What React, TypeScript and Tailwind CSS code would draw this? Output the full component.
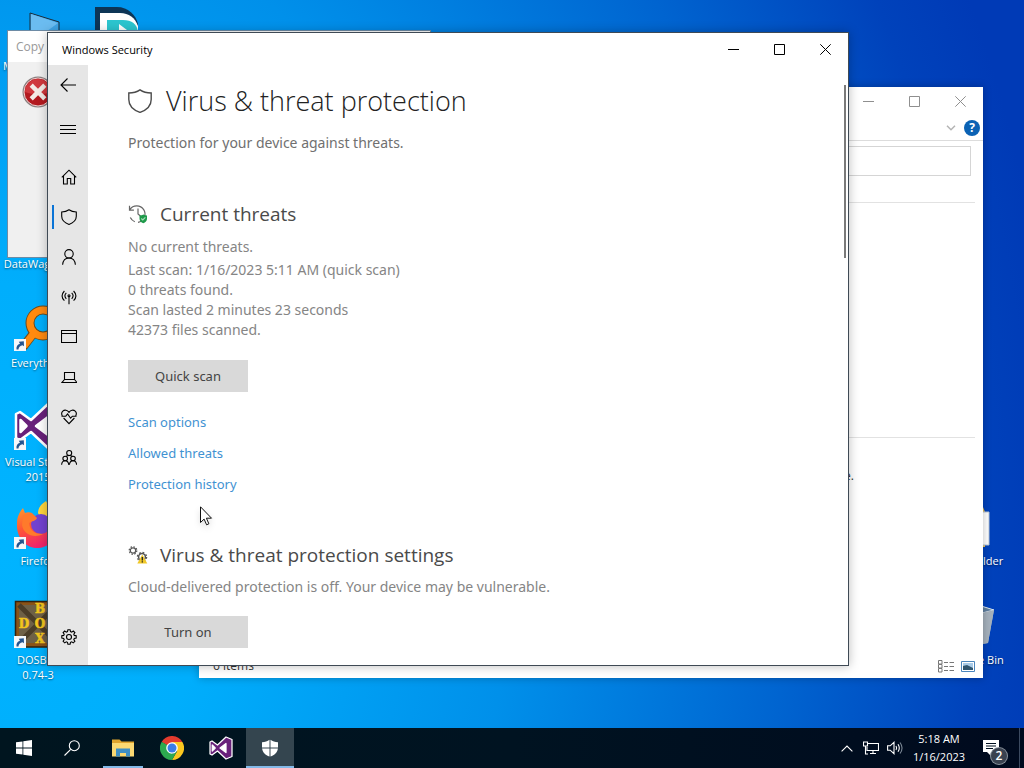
import type { ReactNode } from "react";

const ICON = { fill: "none", stroke: "currentColor", strokeWidth: 1.1 } as const;

function ShieldOutline({ className }: { className: string }) {
  return (
    <svg viewBox="0 0 24 24" className={className} fill="none" stroke="currentColor" strokeWidth="1.400" aria-hidden="true">
      <path d="M12 .8C9 2.800 5 3.900 .8 4v6.500c0 6.500 4.500 10.500 11.200 12.900 6.700-2.400 11.200-6.400 11.200-12.900V4C19 3.900 15 2.800 12 .8z" />
    </svg>
  );
}

function VisualStudioLogo({ className }: { className: string }) {
  return (
    <svg viewBox="0 0 48 48" className={className} aria-hidden="true">
      <path
        fillRule="evenodd"
        fill="#68217a"
        stroke="#fff"
        strokeWidth="2.500"
        strokeLinejoin="round"
        d="M34 2l12 5v34l-12 5-17-16-11 8-4-2V12l4-2 11 8zM34 15v18L22 24zM6.500 18v12l6-6z"
      />
      <path d="M34 15v18L22 24zM6.500 18v12l6-6z" fill="#fff" />
    </svg>
  );
}

function Shortcut() {
  return (
    <svg viewBox="0 0 12 12" className="absolute bottom-0 left-0 h-3 w-3" aria-hidden="true">
      <path d="M0 0h12v12H0z" fill="#f4f7fa" />
      <path d="M2.500 10.500C2 7.500 3.500 5.500 6 4.800L4.800 2.800l5-.6.2 5-1.400-1C6 6.800 4.500 8 4.500 10.500z" fill="#24548f" />
    </svg>
  );
}

function DesktopItem({ label, shortcut, children }: { label: string; shortcut?: boolean; children?: ReactNode }) {
  return (
    <li className="flex h-[99px] w-19 flex-col items-center gap-1">
      <span className="relative block h-12 w-12 shrink-0">
        {children}
        {shortcut && <Shortcut />}
      </span>
      <span className="text-center text-[11px] leading-[15px] whitespace-pre text-white [text-shadow:0_1px_2px_#0008]">{label}</span>
    </li>
  );
}

function Caption({ className }: { className: string }) {
  return (
    <div className={className}>
      <button aria-label="Minimize" className="flex h-8 w-[46px] items-center justify-center">
        <svg viewBox="0 0 11 11" className="h-[11px] w-[11px]" stroke="currentColor"><path d="M0 5.500h11" /></svg>
      </button>
      <button aria-label="Maximize" className="flex h-8 w-[46px] items-center justify-center">
        <svg viewBox="0 0 11 11" className="h-[11px] w-[11px]" fill="none" stroke="currentColor"><path d="M.5 .5h10v10H.5z" /></svg>
      </button>
      <button aria-label="Close" className="flex h-8 w-[46px] items-center justify-center">
        <svg viewBox="0 0 11 11" className="h-[11px] w-[11px]" stroke="currentColor"><path d="M.3 .3l10.400 10.400M10.700 .3L.3 10.700" /></svg>
      </button>
    </div>
  );
}

const NAV: { label: string; icon: ReactNode }[] = [
  { label: "Home", icon: <path d="M.8 8.300L8 1.200l7.200 7.100M2.500 7v8h3.800v-5.500h3.400V15h3.800V7" /> },
  { label: "Virus & threat protection", icon: <path d="M8 .8C6 2.200 3.500 2.900 .7 3v4.300c0 4.200 2.800 6.500 7.300 8.100 4.500-1.600 7.300-3.900 7.300-8.100V3C12.500 2.900 10 2.200 8 .8z" /> },
  { label: "Account protection", icon: <><circle cx="8" cy="4.800" r="4.200" /><path d="M1.600 15.800C2 11.500 4.500 9 8 9s6 2.500 6.400 6.800" /></> },
  {
    label: "Firewall & network protection",
    icon: (
      <>
        <circle cx="8" cy="6.800" r="1" />
        <path d="M8 7.500v7.800M5.300 3.800c-1.600 1.700-1.600 4.300 0 6M10.700 3.800c1.600 1.700 1.600 4.300 0 6M3.400 2C.6 5 .6 8.800 3.400 11.600M12.600 2c2.800 3 2.800 6.800 0 9.600" />
      </>
    ),
  },
  { label: "App & browser control", icon: <path d="M.5 1.500h15v12H.5zM.5 4.500h15" /> },
  { label: "Device security", icon: <path d="M3.500 3.500h10v7h-10zM3.500 10.500l-2.500 3h15l-2.500-3" /> },
  {
    label: "Device performance & health",
    icon: (
      <path d="M1.300 7C.3 5 .6 3.200 1.800 2.100c1.900-1.600 4.500-1.100 6.200 1.200 1.700-2.300 4.300-2.800 6.200-1.200C15.400 3.200 15.700 5 14.700 7M.5 7.200h4.300L6.600 5l3 4.200 1.800-2h4.100M2.600 9l5.400 5.700L13.400 9" />
    ),
  },
  {
    label: "Family options",
    icon: (
      <>
        <circle cx="8.200" cy="4" r="2.500" />
        <circle cx="4.200" cy="9.500" r="2.300" />
        <circle cx="12" cy="9.500" r="2.300" />
        <path d="M.6 15.800c.2-2.700 1.500-4 3.600-4 1.900 0 3.200 1.200 3.600 4M8.400 15.800c.3-2.800 1.700-4 3.600-4 2.100 0 3.400 1.300 3.600 4M5.200 7.200c.7-.5 1.700-.7 3-.7s2.300.2 3 .7" />
      </>
    ),
  },
];

const SCAN_LINES = [
  "Last scan: 1/16/2023 5:11 AM (quick scan)",
  "0 threats found.",
  "Scan lasted 2 minutes 23 seconds",
  "42373 files scanned.",
];

const GEAR_PATH =
  "M6.900 .7h2.200l.4 1.900 1.200.5 1.600-1.100 1.600 1.600-1.100 1.600.5 1.200 1.900.4v2.300l-1.900.4-.5 1.200 1.100 1.600-1.600 1.600-1.600-1.100-1.200.5-.4 1.900H6.900l-.4-1.900-1.200-.5-1.600 1.100-1.600-1.600 1.100-1.600-.5-1.200-1.900-.4V6.800l1.900-.4.5-1.200L2.100 3.600 3.700 2l1.600 1.100 1.200-.5z";

function CopyWindow() {
  return (
    <section aria-label="Copy" className="absolute top-[30px] left-[7px] flex h-[228px] w-[424px] flex-col border border-[#6d8ba5] bg-[#f0f0f0]">
      <header className="h-[31px] bg-white px-2 text-[12px] leading-[31px] text-[#999]">Copy</header>
      <svg viewBox="0 0 32 32" className="mt-3.5 ml-3.5 h-8 w-8" aria-hidden="true">
        <circle cx="16" cy="16" r="15.500" fill="#8a8080" />
        <circle cx="16" cy="16" r="14" fill="#b3191f" stroke="#f0d0d0" />
        <path d="M3 16a13 13 0 0126 0c-8 3-18 3-26 0z" fill="#d0393e" />
        <path d="M10.800 10.800l10.400 10.400M21.200 10.800L10.800 21.200" stroke="#f3ebe6" strokeWidth="4.500" strokeLinecap="square" />
      </svg>
    </section>
  );
}

function ExplorerWindow() {
  return (
    <section aria-label="File Explorer" className="absolute top-[87px] left-[199px] flex h-[591px] w-[784px] flex-col bg-white text-[#333] shadow-[0_0_8px_#0004]">
      <header className="flex h-7 items-center justify-end">
        <Caption className="flex text-[#8f8f8f]" />
      </header>
      <div className="flex h-[26px] items-center justify-end gap-2 border-b border-[#dcdcdc] pr-[3px]">
        <svg viewBox="0 0 10 6" className="h-1.5 w-2.5" fill="none" stroke="#b4b4b4" strokeWidth="1.500" aria-hidden="true"><path d="M1 .8l4 4 4-4" /></svg>
        <button aria-label="Help" className="h-4 w-4 rounded-full bg-[#0b62b4] text-center text-[12px] leading-4 font-bold text-white">?</button>
      </div>
      <div className="px-3 pt-[5px]">
        <input aria-label="Search" className="block h-[30px] w-full border border-[#d5d5d5] bg-white px-2" />
      </div>
      <div className="mt-[26px] mr-2 h-px bg-[#e2e2e2]" />
      <div className="mt-[234px] mr-2 h-px bg-[#e2e2e2]" />
      <p className="mt-[30px] mr-[129px] text-right text-[12px] leading-4">Not available.</p>
      <footer className="mt-auto flex h-6 items-center justify-between pr-2 pl-3.5 text-[12px]">
        <span>6 items</span>
        <span className="flex items-center gap-[7px]">
          <button aria-label="Details view">
            <svg viewBox="0 0 16 13" className="h-[13px] w-4" fill="none" stroke="#777" aria-hidden="true">
              <path d="M.5 .5h3.500v3.500H.5zM.5 4.500h3.500V8H.5zM.5 8.500h3.500V12H.5zM6 2.500h4M11.500 2.500H16M6 6.500h4M11.500 6.500H16M6 10.500h4M11.500 10.500H16" />
            </svg>
          </button>
          <button aria-label="Large icons view">
            <svg viewBox="0 0 14 11" className="h-[11px] w-3.5" aria-hidden="true">
              <path d="M.5 .5h13v10H.5z" fill="#fff" stroke="#4b86bd" />
              <path d="M2 2h10v7H2z" fill="#a8cbe8" />
              <path d="M2 5l4-1 6 3v2H2z" fill="#30566f" />
            </svg>
          </button>
        </span>
      </footer>
    </section>
  );
}

function Sidebar() {
  return (
    <nav aria-label="Sections" className="flex w-10 shrink-0 flex-col bg-[#e6e6e6] text-black">
      <button aria-label="Back" className="flex h-10 items-center justify-center">
        <svg viewBox="0 0 16 14" className="h-3.5 w-4" {...ICON} aria-hidden="true"><path d="M7.500 .5L1 7l6.500 6.500M1 7h15" /></svg>
      </button>
      <button aria-label="Menu" className="mb-1 flex h-12 items-center justify-center">
        <svg viewBox="0 0 16 9" className="h-[9px] w-4" stroke="currentColor" aria-hidden="true"><path d="M0 .5h16M0 4.500h16M0 8.500h16" /></svg>
      </button>
      {NAV.map((item, i) => (
        <button key={item.label} aria-label={item.label} className="relative flex h-10 items-center justify-center pl-0.5">
          {i === 1 && <span className="absolute left-1 h-6 w-0.5 bg-[#0a74d6]" />}
          <svg viewBox="0 0 16 16" className="h-4 w-4" {...ICON} aria-hidden="true">{item.icon}</svg>
        </button>
      ))}
      <button aria-label="Settings" className="mt-auto mb-2 flex h-10 items-center justify-center pl-0.5">
        <svg viewBox="0 0 16 16" className="h-4 w-4" {...ICON} aria-hidden="true"><path d={GEAR_PATH} /><circle cx="8" cy="8" r="2.500" /></svg>
      </button>
    </nav>
  );
}

function SecurityWindow() {
  return (
    <section aria-label="Windows Security" className="absolute top-8 left-[47px] flex h-[634px] w-[802px] flex-col border border-[#3f4a55] bg-white shadow-[0_0_10px_#0004]">
      <header className="flex h-8 shrink-0 items-center justify-between pl-3.5">
        <span className="pt-0.5 text-[11px] text-black">Windows Security</span>
        <Caption className="flex text-black" />
      </header>
      <div className="flex min-h-0 flex-1">
        <Sidebar />
        <main className="min-w-0 flex-1 overflow-hidden px-10 pt-[18px] font-['Noto_Sans','Open_Sans',sans-serif] text-[14px] leading-5 text-[#858585]">
          <h1 className="flex h-9 items-center gap-3.5 font-['Open_Sans','Noto_Sans',sans-serif] text-[27px] leading-9 font-light text-[#222]">
            <ShieldOutline className="h-6 w-6 text-[#4c4c4c]" />
            <span>Virus &amp; threat protection</span>
          </h1>
          <p className="mt-3.5 text-[#707070]">Protection for your device against threats.</p>

          <h2 className="mt-[47px] flex h-7 items-center gap-3 font-['Open_Sans','Noto_Sans',sans-serif] text-[19px] leading-7 text-[#4a4a4a]">
            <svg viewBox="0 0 20 20" className="h-5 w-5" fill="none" aria-hidden="true">
              <path d="M1.800 5.500A8.300 8.300 0 1110 18.300M1.500 1.800v4.400h4.400M10 4.500V10l3 2.500M2.300 13.500c1 2 2.500 3.400 4.500 4.200" stroke="#666" strokeWidth="1.200" />
              <path d="M11.500 11.500c1.500 0 2.600-.3 3.800-1 1.200.7 2.300 1 3.700 1v3.300c0 2.200-1.500 3.700-3.700 4.500-2.300-.8-3.800-2.300-3.800-4.500z" fill="#1e9a4a" />
              <path d="M13.300 14.500l1.500 1.500 2.600-2.700" stroke="#a8dcb8" strokeWidth="1.100" />
            </svg>
            Current threats
          </h2>
          <p className="mt-[9px]">No current threats.</p>
          <div className="mt-[3px]">
            {SCAN_LINES.map((line) => (
              <p key={line}>{line}</p>
            ))}
          </div>
          <button className="mt-5 block h-8 w-30 bg-[#d9d9d9] text-[13px] text-[#444]">Quick scan</button>
          <ul className="mt-5 flex flex-col gap-[11px] text-[13px] text-[#3f92d2]">
            <li><a href="#scan-options">Scan options</a></li>
            <li><a href="#allowed-threats">Allowed threats</a></li>
            <li><a href="#protection-history">Protection history</a></li>
          </ul>

          <h2 className="mt-[47px] flex h-7 items-center gap-3 font-['Open_Sans','Noto_Sans',sans-serif] text-[19px] leading-7 text-[#4a4a4a]">
            <svg viewBox="0 0 20 20" className="h-5 w-5" fill="none" aria-hidden="true">
              <circle cx="5" cy="5.500" r="2.700" stroke="#555" strokeWidth="1.200" />
              <circle cx="5" cy="5.500" r="3.800" stroke="#555" strokeWidth="1.200" strokeDasharray="1.500 1.480" />
              <circle cx="14" cy="12" r="3.400" stroke="#555" strokeWidth="1.500" />
              <circle cx="14" cy="12" r="4.600" stroke="#555" strokeWidth="1.300" strokeDasharray="1.800 1.813" />
              <path d="M14.300 9.500l5 9h-10z" fill="#f0c828" />
              <path d="M14.300 12v3.500M14.300 16.300v1.200" stroke="#222" strokeWidth="1.300" />
            </svg>
            Virus &amp; threat protection settings
          </h2>
          <p className="mt-2">Cloud-delivered protection is off. Your device may be vulnerable.</p>
          <button className="mt-[19px] block h-8 w-30 bg-[#d9d9d9] text-[13px] text-[#444]">Turn on</button>
        </main>
        <div className="mt-5 mr-0.5 h-[173px] w-0.5 bg-[#7a7a7a]" />
      </div>
    </section>
  );
}

function TaskButton({ label, state, children }: { label: string; state?: "open" | "active"; children: ReactNode }) {
  return (
    <button
      aria-label={label}
      className={
        state === "active"
          ? "relative flex w-12 items-center justify-center bg-[#34454f]"
          : "relative flex w-12 items-center justify-center"
      }
    >
      {children}
      {state && (
        <span className={state === "active" ? "absolute inset-x-0 bottom-0 h-0.5 bg-[#83b9e8]" : "absolute inset-x-1 bottom-0 h-0.5 bg-[#83b9e8]"} />
      )}
    </button>
  );
}

function Taskbar() {
  return (
    <footer className="relative flex h-10 shrink-0 justify-between bg-linear-to-r from-[#00151f] via-[#001321] to-[#000a1e] text-white">
      <div className="flex gap-px">
        <div className="mr-0.5 flex">
          <TaskButton label="Start">
            <svg viewBox="0 0 16 16" className="h-4 w-4" fill="#fff" aria-hidden="true">
              <path d="M0 2.300L6.500 1.400v6.200H0zM7.300 1.300L16 0v7.600H7.300zM0 8.400h6.500v6.200L0 13.700zM7.300 8.400H16V16l-8.700-1.300z" />
            </svg>
          </TaskButton>
          <TaskButton label="Search">
            <svg viewBox="0 0 16 16" className="h-4 w-4" {...ICON} aria-hidden="true"><circle cx="10.300" cy="5.700" r="5" /><path d="M6.700 9.300L.5 15.500" /></svg>
          </TaskButton>
        </div>
        <TaskButton label="File Explorer" state="open">
          <svg viewBox="0 0 22 20" className="h-5 w-[22px]" aria-hidden="true">
            <path d="M0 1.500h7.500l2 2H22V8H0z" fill="#e0a52e" />
            <path d="M0 5h22v13.500H0z" fill="#fbd972" />
            <path d="M4 10.500h14v8h-4V15H8v3.500H4z" fill="#3f8fc4" />
          </svg>
        </TaskButton>
        <TaskButton label="Chrome">
          <svg viewBox="0 0 24 24" className="h-6 w-6" aria-hidden="true">
            <path d="M12 12L1.600 6A12 12 0 0122.400 6z" fill="#e33b2e" />
            <path d="M12 12v12A12 12 0 011.600 6z" fill="#2da94f" />
            <path d="M12 6h10.400A12 12 0 0112 24l5.200-9z" fill="#fcc71f" />
            <path d="M6.800 15L1.600 6l5.200 3L12 18l5.200-3L12 24z" fill="#2da94f" />
            <circle cx="12" cy="12" r="5.800" fill="#fff" />
            <circle cx="12" cy="12" r="4.500" fill="#3b7de8" />
          </svg>
        </TaskButton>
        <TaskButton label="Visual Studio">
          <VisualStudioLogo className="h-6 w-6" />
        </TaskButton>
        <TaskButton label="Windows Security" state="active">
          <svg viewBox="0 0 18 18" className="h-[18px] w-[18px]" fill="#fff" aria-hidden="true">
            <path d="M8.500 .8v7.700H1V3.200C4 3.100 6.500 2.300 8.500 .8zM9.500 .8c2 1.500 4.500 2.300 7.500 2.400v5.300H9.500zM1.100 9.500h7.400v8C4.500 16.200 1.600 13.500 1.100 9.500zM9.500 9.500h7.400c-.5 4-3.400 6.700-7.400 8z" />
          </svg>
        </TaskButton>
      </div>
      <div className="flex items-center pr-1">
        <button aria-label="Show hidden icons" className="flex w-6 justify-center">
          <svg viewBox="0 0 12 7" className="h-[7px] w-3" {...ICON} aria-hidden="true"><path d="M.6 6.400L6 1l5.400 5.400" /></svg>
        </button>
        <button aria-label="Network" className="flex w-6 justify-center">
          <svg viewBox="0 0 16 14" className="h-3.5 w-4" {...ICON} aria-hidden="true"><path d="M5 2.500h10.500v7H4V6M7 12.500h6M10 9.500v3M.5 1h4v4h-4zM2.500 5v8H5" /></svg>
        </button>
        <button aria-label="Volume" className="flex w-6 justify-center">
          <svg viewBox="0 0 16 14" className="h-3.5 w-4" {...ICON} aria-hidden="true">
            <path d="M.6 4.800h2.600L7 1.300v11.400L3.200 9.200H.6zM9 5c.8 1.300.8 2.700 0 4M11 3.200c1.700 2.500 1.700 5.100 0 7.600" />
            <path d="M13 1.500c2.600 3.500 2.600 7.500 0 11" stroke="#7a8794" />
          </svg>
        </button>
        <time dateTime="2023-01-16T05:18" className="w-16 text-center text-[11px] leading-[18px]">
          5:18 AM
          <br />
          1/16/2023
        </time>
        <button aria-label="Notifications, 2 new" className="relative flex h-10 w-12 items-center justify-center pr-2">
          <svg viewBox="0 0 16 16" className="h-4 w-4" aria-hidden="true">
            <path d="M0 0h16v12H8v4l-4-4H0z" fill="#fff" />
            <path d="M3 3.500h10M3 6h10M3 8.500h7" stroke="#001020" />
          </svg>
          <span className="absolute right-3 bottom-1 h-4 w-4 rounded-full bg-[#3a4250] text-center text-[12px] leading-4 font-semibold ring-1 ring-[#8a939d]">2</span>
        </button>
        <span className="h-10 w-px bg-[#3c4a60]" />
      </div>
    </footer>
  );
}

export default function App() {
  return (
    <div className="flex h-screen flex-col overflow-hidden bg-[radial-gradient(ellipse_104%_175%_at_0%_72%,#00b4ff_0%,#00aefc_20%,#0090ea_48%,#0064d0_74%,#0042bb_92%,#003ab6_100%)] font-['Open_Sans','Noto_Sans',sans-serif]">
      <div className="relative min-h-0 flex-1">
        <ul className="absolute top-1.5 left-0 flex flex-col">
          <DesktopItem label="My Computer">
            <svg viewBox="0 0 48 48" className="h-12 w-12" aria-hidden="true">
              <path d="M16 7l29 9v24H16z" fill="#3fa4e6" stroke="#1b2c3a" />
              <path d="M17 8l27 9-27 20z" fill="#6bbcf0" />
            </svg>
          </DesktopItem>
          <DesktopItem label="" />
          <DesktopItem label="DataWagon…" />
          <DesktopItem label="Everything" shortcut>
            <svg viewBox="0 0 48 48" className="h-12 w-12" fill="none" aria-hidden="true">
              <circle cx="29" cy="20" r="13" stroke="#6b4a1c" strokeWidth="9" />
              <path d="M19 31L9 44" stroke="#6b4a1c" strokeWidth="9" />
              <circle cx="29" cy="20" r="13" stroke="#ff8a0f" strokeWidth="7" />
              <path d="M20 30L10 43" stroke="#ff8a0f" strokeWidth="7" />
            </svg>
          </DesktopItem>
          <DesktopItem label={"Visual Studio\n2015"} shortcut>
            <VisualStudioLogo className="h-12 w-12" />
          </DesktopItem>
          <DesktopItem label="Firefox" shortcut>
            <svg viewBox="0 0 48 48" className="h-12 w-12" aria-hidden="true">
              <defs>
                <linearGradient id="fox" x1="0" y1="0" x2="0.400" y2="1">
                  <stop offset="0" stopColor="#ff9a2a" />
                  <stop offset=".5" stopColor="#ff5535" />
                  <stop offset="1" stopColor="#f0256b" />
                </linearGradient>
              </defs>
              <path d="M24 12c0-5 3-9 8-12 2 6 14 10 14 24 0 8-4 14-8 17z" fill="#ffd53d" />
              <path d="M3 22C3 16 5 12 9 7l2 5c2-1 5-1 7 0l3 3c5 3 16 4 22 12 0 12-9 20-20 20S2 37 3 22z" fill="url(#fox)" />
              <circle cx="27" cy="23" r="10" fill="#7242d0" />
              <path d="M9 14c6-2 12 0 14 3-1 3-5 3-8 5 1 8 6 11 14 11-9 5-20 0-21-9z" fill="#ff7a2b" />
            </svg>
          </DesktopItem>
          <DesktopItem label={"DOSBox\n0.74-3"} shortcut>
            <svg viewBox="0 0 48 48" className="h-12 w-12" aria-hidden="true">
              <path d="M1.500 1.500H48V47H1.500z" fill="#8a5318" stroke="#33220d" strokeWidth="1.500" />
              <path d="M5 5h38v38H5z" fill="#6e6046" />
              <path d="M5 5l38 38M43 5L5 43" stroke="#4b3d28" strokeWidth="5" />
              <g fill="#f2c51d" stroke="#f2c51d" strokeWidth=".6" fontFamily="DejaVu Serif, serif" fontWeight="700" fontSize="12" textAnchor="middle">
                <text x="26" y="13">B</text>
                <text x="10" y="28">D</text>
                <text x="26" y="28">O</text>
                <text x="26" y="43">X</text>
              </g>
            </svg>
          </DesktopItem>
        </ul>
        <svg viewBox="0 0 48 48" className="absolute top-1.5 left-[93px] h-12 w-12" aria-label="DataWagon app">
          <path d="M2 1h22c11 0 19 8 21 17v29H2z" fill="#0d3556" />
          <path d="M7 7h20c9 0 15 5 18 13v27H7z" fill="#fff" />
          <path d="M14 14h16c9 0 14 4 15 12v18H14z" fill="#2cc5cf" />
          <path d="M26 18l12 9-12 9z" fill="#fff" />
        </svg>
        <ul className="absolute top-[501px] right-[11px] flex flex-col">
          <DesktopItem label="New folder">
            <svg viewBox="0 0 48 48" className="h-12 w-12" aria-hidden="true">
              <path d="M8 6h24l2 5v35H8z" fill="#e9c45c" />
              <path d="M18 11h20v33H18z" fill="#fff" stroke="#b9c6d6" />
            </svg>
          </DesktopItem>
          <DesktopItem label="Recycle Bin">
            <svg viewBox="0 0 48 48" className="h-12 w-12" aria-hidden="true">
              <path d="M5 10l19-6 19 6-6 33-18 3-9-3z" fill="#9fb2c4" />
              <path d="M5 10l22 4 16-4-16-5z" fill="#5f7f9f" stroke="#dbe6ef" />
              <path d="M27 14l16-4-6 33-10 2z" fill="#a5b1bc" />
            </svg>
          </DesktopItem>
        </ul>
        <CopyWindow />
        <ExplorerWindow />
        <SecurityWindow />
        <svg viewBox="0 0 13 20" className="absolute top-[506px] left-[200px] h-5 w-[13px] drop-shadow-md" aria-hidden="true">
          <path d="M.5 .8v15.700l3.600-3.400 2.500 5.700 2.300-1-2.500-5.600h5.100z" fill="#fff" stroke="#111" />
        </svg>
      </div>
      <Taskbar />
    </div>
  );
}
